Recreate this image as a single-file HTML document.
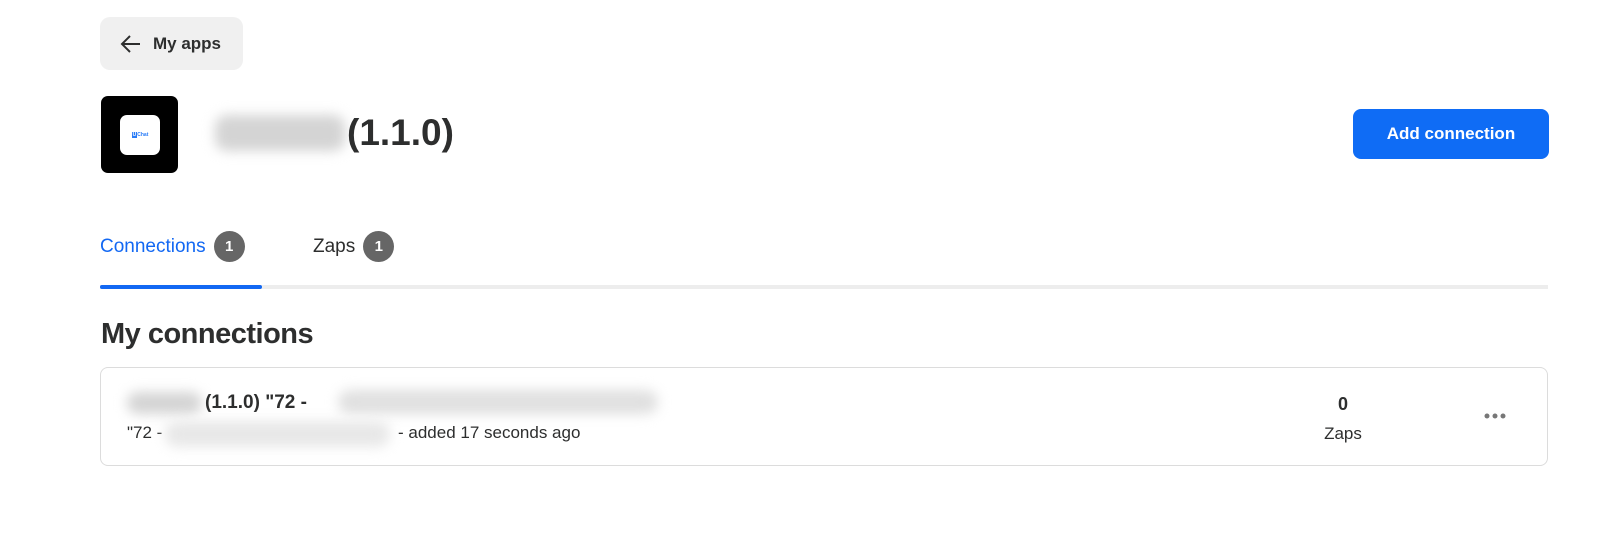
<!DOCTYPE html>
<html><head><meta charset="utf-8"><style>
*{box-sizing:border-box;margin:0;padding:0}
body{width:1600px;height:533px;background:#fff;font-family:"Liberation Sans",sans-serif;color:#2d2e2e;position:relative;overflow:hidden}
.abs{position:absolute}
.back{left:100px;top:17px;width:143px;height:53px;background:#f0f0f0;border-radius:10px;font-weight:bold;font-size:17px;display:flex;align-items:center;padding-left:19px;gap:12px}
.logo{left:101px;top:96px;width:77px;height:77px;background:#000;border-radius:7px}
.logo .in{position:absolute;left:19px;top:19px;width:40px;height:40px;background:#fff;border-radius:7px;font-size:5px;color:#2a7cf7;display:flex;align-items:center;justify-content:center;font-weight:bold}
.blur{background:#d4d4d4;filter:blur(6px);border-radius:12px}
.title{left:347px;top:112px;font-size:37px;font-weight:bold;color:#2d2e2e}
.btn{left:1353px;top:109px;width:196px;height:50px;background:#0f6cf5;border-radius:8px;color:#fff;font-weight:bold;font-size:17px;display:flex;align-items:center;justify-content:center}
.tab{top:231px;font-size:19px;display:flex;align-items:center;gap:8px}
.badge{width:31px;height:31px;border-radius:50%;background:#666;color:#fff;font-size:15px;font-weight:bold;display:flex;align-items:center;justify-content:center}
.line{left:100px;top:285px;width:1448px;height:4px;background:#ededed}
.uline{left:100px;top:285px;width:162px;height:4px;background:#1268f3;border-radius:2px}
h2{position:absolute;left:101px;top:318px;font-size:29px;font-weight:bold;letter-spacing:-0.5px}
.card{left:100px;top:367px;width:1448px;height:99px;border:1px solid #dcdcdc;border-radius:8px}
</style></head><body>
<div class="abs back"><svg width="22" height="20" viewBox="0 0 22 20"><path d="M11 2 3 10l8 8M3 10h18" fill="none" stroke="#2d2e2e" stroke-width="2"/></svg>My apps</div>
<div class="abs logo"><div class="in"><span style="background:#2a7cf7;color:#fff;padding:0 1px">U</span>Chat</div></div>
<div class="abs blur" style="left:215px;top:115px;width:130px;height:36px"></div>
<div class="abs title">(1.1.0)</div>
<div class="abs btn">Add connection</div>
<div class="abs tab" style="left:100px;color:#1268f3">Connections <span class="badge">1</span></div>
<div class="abs tab" style="left:313px">Zaps <span class="badge">1</span></div>
<div class="abs line"></div><div class="abs uline"></div>
<h2>My connections</h2>
<div class="abs card"></div>
<div class="abs blur" style="left:127px;top:392px;width:75px;height:22px"></div>
<div class="abs" style="left:205px;top:392px;font-size:19px;font-weight:bold">(1.1.0) "72 -</div>
<div class="abs blur" style="left:338px;top:390px;width:320px;height:24px;background:#e0e0e0"></div>
<div class="abs" style="left:127px;top:423px;font-size:17px">"72 -</div>
<div class="abs blur" style="left:165px;top:421px;width:225px;height:26px;background:#e8e8e8"></div>
<div class="abs" style="left:398px;top:423px;font-size:17px">- added 17 seconds ago</div>
<div class="abs" style="left:1318px;top:394px;width:50px;text-align:center;font-size:18px;font-weight:bold">0</div>
<div class="abs" style="left:1310px;top:424px;width:66px;text-align:center;font-size:17px">Zaps</div>
<svg class="abs" style="left:1483px;top:412px" width="24" height="8"><circle cx="4" cy="4" r="2.5" fill="#777"/><circle cx="12" cy="4" r="2.5" fill="#777"/><circle cx="20" cy="4" r="2.5" fill="#777"/></svg>
</body></html>
